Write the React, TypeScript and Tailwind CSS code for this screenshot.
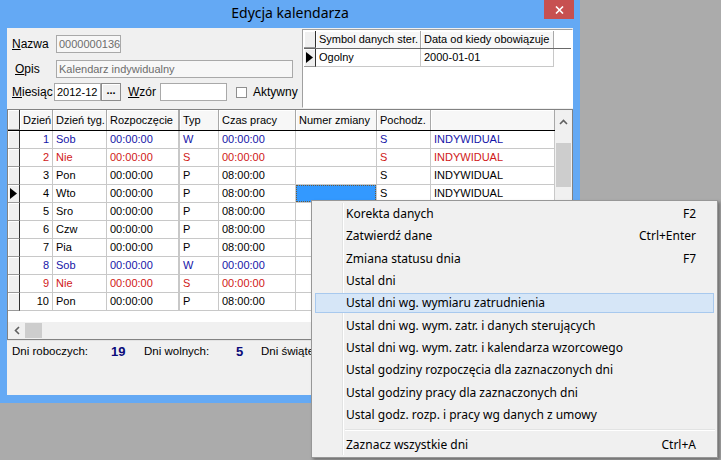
import clsx from "clsx";

const GRID_FONT = "font-['Liberation_Sans',Arial,sans-serif]";
const UI_FONT = "font-['Noto_Sans','Open_Sans',sans-serif]";

type Tone = "blue" | "red" | "black";

const DAYS: { d: number; t: string; start: string; typ: string; czas: string; tone: Tone }[] = [
  { d: 1, t: "Sob", start: "00:00:00", typ: "W", czas: "00:00:00", tone: "blue" },
  { d: 2, t: "Nie", start: "00:00:00", typ: "S", czas: "00:00:00", tone: "red" },
  { d: 3, t: "Pon", start: "00:00:00", typ: "P", czas: "08:00:00", tone: "black" },
  { d: 4, t: "Wto", start: "00:00:00", typ: "P", czas: "08:00:00", tone: "black" },
  { d: 5, t: "Sro", start: "00:00:00", typ: "P", czas: "08:00:00", tone: "black" },
  { d: 6, t: "Czw", start: "00:00:00", typ: "P", czas: "08:00:00", tone: "black" },
  { d: 7, t: "Pia", start: "00:00:00", typ: "P", czas: "08:00:00", tone: "black" },
  { d: 8, t: "Sob", start: "00:00:00", typ: "W", czas: "00:00:00", tone: "blue" },
  { d: 9, t: "Nie", start: "00:00:00", typ: "S", czas: "00:00:00", tone: "red" },
  { d: 10, t: "Pon", start: "00:00:00", typ: "P", czas: "08:00:00", tone: "black" },
];

const TONE: Record<Tone, string> = {
  blue: "text-[#1515a8]",
  red: "text-[#d01818]",
  black: "text-black",
};

const MENU = [
  { label: "Korekta danych", key: "F2" },
  { label: "Zatwierdź dane", key: "Ctrl+Enter" },
  { label: "Zmiana statusu dnia", key: "F7" },
  { label: "Ustal dni" },
  { label: "Ustal dni wg. wymiaru zatrudnienia", active: true },
  { label: "Ustal dni wg. wym. zatr. i danych sterujących" },
  { label: "Ustal dni wg. wym. zatr. i kalendarza wzorcowego" },
  { label: "Ustal godziny rozpoczęcia dla zaznaczonych dni" },
  { label: "Ustal godziny pracy dla zaznaczonych dni" },
  { label: "Ustal godz. rozp. i pracy wg danych z umowy" },
];

function Arrow() {
  return (
    <svg width="7" height="11" viewBox="0 0 7 11">
      <polygon points="0,0 7,5.5 0,11" fill="#000" />
    </svg>
  );
}

function IndicatorCell({ current }: { current?: boolean }) {
  return (
    <div className="w-[12px] h-full shrink-0 bg-[#f0f0f0] border-r border-r-[#303030] border-b border-b-[#9a9a9a] shadow-[inset_1px_1px_0_#ffffff] flex items-center justify-center">
      {current && <Arrow />}
    </div>
  );
}

function HeadCell({ w, children, thick }: { w: string; children?: React.ReactNode; thick?: boolean }) {
  return (
    <div
      className={clsx(
        "h-full shrink-0 px-[3px] flex items-center whitespace-nowrap overflow-hidden bg-[#f7f7f7] border-[#a8a8a8] shadow-[inset_1px_1px_0_#ffffff]",
        thick ? "border-r-2" : "border-r",
        w
      )}
    >
      {children}
    </div>
  );
}

function Cell({
  w,
  children,
  right,
  thick,
  flush,
}: {
  w: string;
  children?: React.ReactNode;
  right?: boolean;
  thick?: boolean;
  flush?: boolean;
}) {
  return (
    <div
      className={clsx(
        "h-full shrink-0 flex items-center whitespace-nowrap overflow-hidden border-b border-[#c8c8c8]",
        flush ? "p-0" : "px-[3px]",
        thick ? "border-r-2" : "border-r",
        right && "justify-end",
        w
      )}
    >
      {children}
    </div>
  );
}

function TextBox({ w, value, muted }: { w: string; value?: string; muted?: boolean }) {
  return (
    <div
      className={clsx(
        "h-[18px] shrink-0 border border-[#a9a9a9] px-[2px] flex items-center whitespace-nowrap overflow-hidden",
        muted ? "bg-[#f7f7f7] text-[#6d6d6d]" : "bg-white text-black",
        w
      )}
    >
      {value}
    </div>
  );
}

export default function App() {
  return (
    <div className={clsx("relative w-[721px] h-[460px] overflow-hidden bg-[#ababab]", GRID_FONT)}>
      {/* Window */}
      <div className="w-[580px] h-[403px] bg-[#64a9f4] flex flex-col">
        {/* Title bar */}
        <div className="h-[28px] shrink-0 flex items-start">
          <div className={clsx("flex-1 h-[25px] flex items-center justify-center pl-[36px] text-[14px] text-black", UI_FONT)}>
            Edycja kalendarza
          </div>
          <div className="w-[30px] h-[19px] mr-[6px] bg-[#c75050] flex items-center justify-center text-white">
            <svg width="9" height="8" viewBox="0 0 9 8">
              <path d="M1 0.5 L8 7.5 M8 0.5 L1 7.5" stroke="#fff" strokeWidth="1.6" />
            </svg>
          </div>
        </div>

        {/* Client area */}
        <div className="mx-[7px] h-[367px] bg-[#f0f0f0] flex flex-col text-[11px]">
          {/* Header form + control grid */}
          <div className="h-[81px] shrink-0 flex">
            <div className="w-[295px] shrink-0 flex flex-col">
              <div className="mt-[7px] flex items-center">
                <span className="w-[49px] pl-[5px] text-[12px]">
                  <u>N</u>azwa
                </span>
                <TextBox w="w-[65px]" value="0000000136" muted />
              </div>
              <div className="mt-[7px] flex items-center">
                <span className="w-[49px] pl-[8px] text-[12px]">
                  <u>O</u>pis
                </span>
                <TextBox w="w-[237px]" value="Kalendarz indywidualny" muted />
              </div>
              <div className="mt-[5px] flex items-center">
                <span className="w-[47px] pl-[5px] text-[12px]">
                  <u>M</u>iesiąc
                </span>
                <TextBox w="w-[47px]" value="2012-12" />
                <div className="w-[20px] h-[18px] border border-[#8c8c8c] bg-[#f0f0f0] shadow-[inset_1px_1px_0_#ffffff] flex items-center justify-center font-bold leading-none pb-[3px]">
                  ...
                </div>
                <span className="ml-[7px] w-[32px] text-[12px]">
                  <u>W</u>zór
                </span>
                <TextBox w="w-[67px]" />
                <div className="ml-[9px] w-[11px] h-[11px] border border-[#8f8f8f] bg-white" />
                <span className="ml-[6px] text-[12px]">Aktywny</span>
              </div>
            </div>

            {/* Control data grid */}
            <div className="mt-[1px] w-[271px] h-[79px] border border-[#a0a0a0] border-r-white border-b-white bg-white p-[1px]">
              <div className="h-[18px] flex border-b border-[#696969]">
                <IndicatorCell />
                <HeadCell w="w-[105px]">Symbol danych&nbsp;ster.</HeadCell>
                <HeadCell w="w-[133px]">Data od kiedy obowiązuje</HeadCell>
              </div>
              <div className="h-[18px] flex">
                <IndicatorCell current />
                <Cell w="w-[105px]">Ogolny</Cell>
                <Cell w="w-[133px]">2000-01-01</Cell>
              </div>
            </div>
          </div>

          {/* Days grid */}
          <div className="h-[231px] shrink-0 border border-[#828282] bg-white flex flex-col">
            <div className="h-[212px] flex">
              <div className="w-[547px] flex flex-col">
                <div className="h-[21px] shrink-0 flex border-b border-black">
                  <IndicatorCell />
                  <HeadCell w="w-[33px]">Dzień</HeadCell>
                  <HeadCell w="w-[54px]">Dzień tyg.</HeadCell>
                  <HeadCell w="w-[73px]" thick>Rozpoczęcie</HeadCell>
                  <HeadCell w="w-[39px]">Typ</HeadCell>
                  <HeadCell w="w-[77px]">Czas pracy</HeadCell>
                  <HeadCell w="w-[81px]">Numer zmiany</HeadCell>
                  <HeadCell w="w-[54px]">Pochodz.</HeadCell>
                  <HeadCell w="w-[124px]" />
                </div>
                {DAYS.map((r) => (
                  <div key={r.d} className={clsx("h-[18px] shrink-0 flex text-[11px]", TONE[r.tone])}>
                    <IndicatorCell current={r.d === 4} />
                    <Cell w="w-[33px]" right>{r.d}</Cell>
                    <Cell w="w-[54px]">{r.t}</Cell>
                    <Cell w="w-[73px]" thick>{r.start}</Cell>
                    <Cell w="w-[39px]">{r.typ}</Cell>
                    <Cell w="w-[77px]">{r.czas}</Cell>
                    <Cell w="w-[81px]" flush>
                      {r.d === 4 && <div className="w-full h-full bg-[#3399ff] border border-dotted border-[#6b5a3a]" />}
                    </Cell>
                    {/* cells below the popup menu are covered, left empty */}
                    <Cell w="w-[54px]">{r.d <= 4 ? "S" : ""}</Cell>
                    <Cell w="w-[124px]">{r.d <= 4 ? "INDYWIDUAL" : ""}</Cell>
                  </div>
                ))}
              </div>
              {/* vertical scrollbar */}
              <div className="w-[17px] bg-[#f0f0f0] flex flex-col items-center">
                <svg className="mt-[9px]" width="9" height="6" viewBox="0 0 9 6">
                  <path d="M1 5 L4.5 1.5 L8 5" stroke="#606060" strokeWidth="1.6" fill="none" />
                </svg>
                <div className="mt-[18px] w-[15px] h-[44px] bg-[#cdcdcd]" />
              </div>
            </div>
            {/* horizontal scrollbar */}
            <div className="h-[17px] flex">
              <div className="w-[547px] bg-[#f0f0f0] flex items-center">
                <svg className="ml-[6px]" width="6" height="9" viewBox="0 0 6 9">
                  <path d="M5 1 L1.5 4.5 L5 8" stroke="#606060" strokeWidth="1.6" fill="none" />
                </svg>
                <div className="ml-[5px] w-[17px] h-[15px] bg-[#cdcdcd]" />
              </div>
              <div className="w-[17px] bg-[#f0f0f0]" />
            </div>
          </div>

          {/* Summary line */}
          <div className="h-[22px] shrink-0 flex items-center text-[11.5px] border-t border-[#e3e3e3]">
            <span className="ml-[5px] w-[99px]">Dni roboczych:</span>
            <span className="w-[33px] font-bold text-[#0a0a7a] text-[13px]">19</span>
            <span className="w-[92px]">Dni wolnych:</span>
            <span className="w-[25px] font-bold text-[#0a0a7a] text-[13px]">5</span>
            <span>Dni świątecznych:</span>
          </div>
        </div>
      </div>

      {/* Context menu */}
      <div
        className={clsx(
          "absolute left-[311px] top-[200px] w-[407px] h-[258px] bg-[#f0f0f0] border border-[#979797] shadow-[2px_2px_3px_rgba(0,0,0,0.35)] pt-[2px] px-[2px] text-[12px] text-black",
          UI_FONT
        )}
      >
        {/* gutter line */}
        <div className="absolute left-[30px] top-[2px] bottom-[2px] w-[2px] border-l border-[#e2e3e3] border-r border-r-white" />
        {MENU.map((m) => (
          <div key={m.label} className="relative h-[22.3px] flex items-center">
            {m.active && (
              <div className="absolute left-[1px] right-[1px] top-[1px] bottom-[1px] bg-[#d6e6f7] border border-[#a8c9ee]" />
            )}
            <span className="relative pl-[32px] flex-1 whitespace-nowrap">{m.label}</span>
            {m.key && <span className="relative pr-[19px]">{m.key}</span>}
          </div>
        ))}
        <div className="h-[8px] flex items-center pl-[31px]">
          <div className="flex-1 border-t border-[#e2e3e3] border-b border-b-white" />
        </div>
        <div className="h-[22px] flex items-center">
          <span className="pl-[32px] flex-1">Zaznacz wszystkie dni</span>
          <span className="pr-[19px]">Ctrl+A</span>
        </div>
      </div>
    </div>
  );
}
